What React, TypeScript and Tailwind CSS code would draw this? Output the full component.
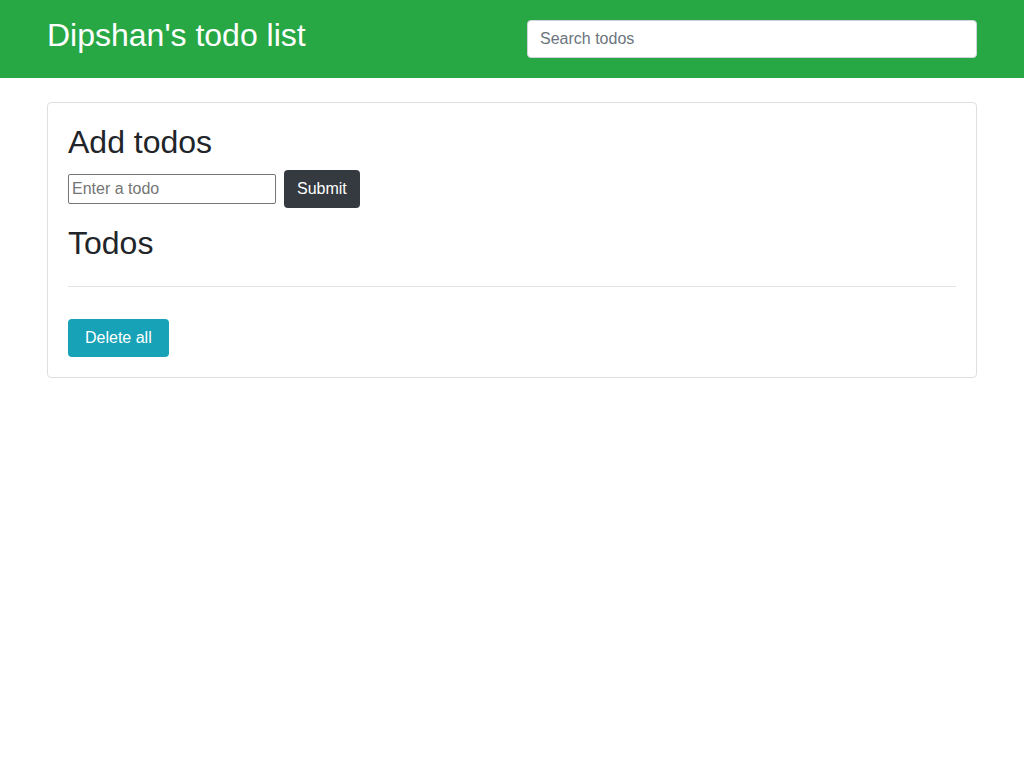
import { useState } from 'react';

// Simple todo page: green top bar with search, one card with the add form
// and the (empty) list.

export default function App() {
  const [todos, setTodos] = useState<string[]>([]);
  const [draft, setDraft] = useState('');
  const [query, setQuery] = useState('');

  const shown = todos.filter((t) => t.toLowerCase().includes(query.toLowerCase()));

  return (
    <div className="min-h-screen bg-white text-[#212529] font-['Liberation_Sans',Arial,sans-serif] text-base leading-6">
      <header className="bg-[#28a745] py-4">
        <div className="mx-auto max-w-[960px] px-[15px] flex items-center justify-between">
          <h1 className="text-[32px] leading-[1.2] font-normal text-white mb-2">
            Dipshan&apos;s todo list
          </h1>
          <input
            value={query}
            onChange={(e) => setQuery(e.target.value)}
            placeholder="Search todos"
            className="w-[450px] h-[38px] rounded border border-[#ced4da] bg-white px-3 text-base text-[#495057] placeholder:text-[#6c757d] outline-none"
          />
        </div>
      </header>

      <main className="mx-auto max-w-[960px] px-[15px] mt-6">
        <div className="rounded border border-[#dfdfdf] p-5">
          <h2 className="text-[32px] leading-[1.2] font-normal mb-2">Add todos</h2>
          <form
            className="flex items-center mb-4"
            onSubmit={(e) => {
              e.preventDefault();
              if (draft.trim()) setTodos([...todos, draft.trim()]);
              setDraft('');
            }}
          >
            <input
              value={draft}
              onChange={(e) => setDraft(e.target.value)}
              placeholder="Enter a todo"
              className="w-[208px] h-[30px] border border-[#767676] rounded-[2px] px-[3px] text-base placeholder:text-[#757575] outline-none"
            />
            <button
              type="submit"
              className="ml-2 h-[38px] px-[13px] rounded bg-[#343a40] text-white text-base"
            >
              Submit
            </button>
          </form>

          <h2 className="text-[32px] leading-[1.2] font-normal mb-2">Todos</h2>
          <ul>
            {shown.map((t, i) => (
              <li key={i} className="py-1">
                {t}
              </li>
            ))}
          </ul>
          <hr className="mt-6 mb-8 border-0 border-t border-[#e5e5e5]" />
          <button
            onClick={() => setTodos([])}
            className="h-[38px] px-[17px] rounded bg-[#17a2b8] text-white text-base"
          >
            Delete all
          </button>
        </div>
      </main>
    </div>
  );
}
